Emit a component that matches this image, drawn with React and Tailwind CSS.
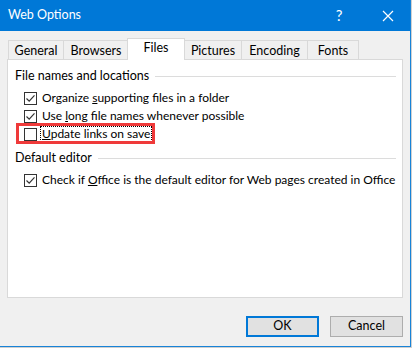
import React from "react";

const font = { fontFamily: 'Lato, "Noto Sans", sans-serif' };

function Check({ checked }) {
  return (
    <div className="w-[13px] h-[13px] border border-[#333333] bg-white flex items-center justify-center shrink-0">
      {checked && (
        <svg width="11" height="11" viewBox="0 0 11 11">
          <path d="M1.5 5.5 L4.2 8.2 L9.5 2.3" fill="none" stroke="#333333" strokeWidth="1.2" />
        </svg>
      )}
    </div>
  );
}

function Tab({ label, w, selected }) {
  if (selected) {
    return (
      <div
        className={`${w} h-[22px] -mx-[1px] z-10 bg-white border border-b-0 border-[#d9d9d9] flex items-center justify-center text-[12.5px] text-black pb-[2px] mb-[-1px]`}
      >
        {label}
      </div>
    );
  }
  return (
    <div
      className={`${w} h-[19px] bg-[#f0f0f0] border border-b-0 border-[#d9d9d9] -mr-[1px] flex items-center justify-center text-[12.5px] text-black pt-[2px]`}
    >
      {label}
    </div>
  );
}

export default function App() {
  return (
    <div className="w-[412px] h-[348px] bg-[#d0d0d0]" style={font}>
      <div className="w-[411px] h-[347px] border-r border-b border-[#1883d7] bg-[#f0f0f0] flex flex-col">
        <div className="h-[31px] bg-[#0078d7] text-white flex items-center shrink-0">
          <span className="ml-[8px] text-[12.5px] leading-none">Web Options</span>
          <span className="ml-auto w-[14px] text-[15px] text-center leading-none mr-[36px]">?</span>
          <svg width="12" height="12" viewBox="0 0 12 12" className="mr-[16px]">
            <path d="M1 1 L11 11 M11 1 L1 11" stroke="white" strokeWidth="1.2" />
          </svg>
        </div>
        <div className="flex items-end h-[28px] pl-[8px] shrink-0">
          <Tab label="General" w="w-[56px]" />
          <Tab label="Browsers" w="w-[66px]" />
          <Tab label="Files" w="w-[58px]" selected />
          <Tab label="Pictures" w="w-[58px]" />
          <Tab label="Encoding" w="w-[67px]" />
          <Tab label="Fonts" w="w-[52px]" />
        </div>
        <div className="ml-[7px] w-[396px] h-[239px] bg-white border border-[#d9d9d9] text-[12px] text-black relative whitespace-nowrap">
          <div className="flex items-center pl-[7px] pr-[6px] mt-[7px] h-[18px] text-[12.5px]">
            <span>File names and locations</span>
            <div className="flex-1 h-px bg-[#dcdcdc] ml-[6px]" />
          </div>
          <div className="pl-[16px] mt-[4px] flex flex-col">
            <div className="flex items-center h-[18px]">
              <Check checked />
              <span className="ml-[5px]">
                Organize <span className="underline">s</span>upporting files in a folder
              </span>
            </div>
            <div className="flex items-center h-[18px]">
              <Check checked />
              <span className="ml-[5px]">
                Use <span className="underline">l</span>ong file names whenever possible
              </span>
            </div>
            <div className="flex items-center h-[18px] relative">
              <Check />
              <span className="ml-[3px] px-[1px] border border-dotted border-black leading-[14px]">
                <span className="underline">U</span>pdate links on save
              </span>
              <div className="absolute left-[-8px] top-[-2px] w-[139px] h-[21px] border-[3px] border-[#ef3a3a]" />
            </div>
          </div>
          <div className="flex items-center pl-[7px] pr-[6px] mt-[6px] h-[18px] text-[12.5px]">
            <span>Default editor</span>
            <div className="flex-1 h-px bg-[#dcdcdc] ml-[6px]" />
          </div>
          <div className="pl-[16px] mt-[4px] flex items-center h-[18px]">
            <Check checked />
            <span className="ml-[5px]">
              Check if <span className="underline">O</span>ffice is the default editor for Web pages created in Office
            </span>
          </div>
        </div>
        <div className="flex justify-end gap-[11px] pr-[7px] mt-[18px] text-[12.5px] text-black">
          <div className="w-[73px] h-[21px] bg-[#e1e1e1] border-2 border-[#0078d7] flex items-center justify-center">OK</div>
          <div className="w-[73px] h-[21px] bg-[#e1e1e1] border border-[#adadad] flex items-center justify-center">Cancel</div>
        </div>
      </div>
    </div>
  );
}
